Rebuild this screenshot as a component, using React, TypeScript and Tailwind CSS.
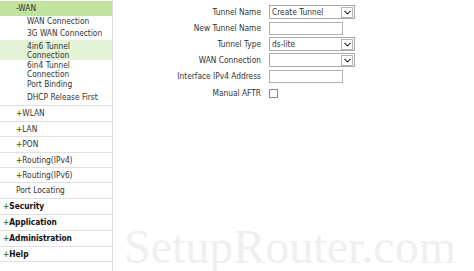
import React from 'react';

const font = { fontFamily: '"DejaVu Sans Condensed", "DejaVu Sans", sans-serif' };

const Plus = () => <span className="text-[#3f7f2a] font-bold">+</span>;

const Chevron = () => (
  <span className="flex h-[11px] w-[12px] items-center justify-center border border-[#b5b5b5] bg-white">
    <svg width="7" height="5" viewBox="0 0 7 5">
      <path d="M0.5 0.8 L3.5 3.8 L6.5 0.8" fill="none" stroke="#333" strokeWidth="1.2" />
    </svg>
  </span>
);

const Select = ({ value }: { value: string }) => (
  <div className="flex h-[14px] w-[86px] items-center justify-between border border-[#a9a9a9] bg-white pl-[2px] pr-[1px]">
    <span className="leading-none">{value}</span>
    <Chevron />
  </div>
);

const Input = () => <div className="h-[13px] w-[74px] border border-[#b0b0b0] bg-white" />;

const subItems: { label: string[]; cls: string; active?: boolean }[] = [
  { label: ['WAN Connection'], cls: 'h-[12px] pt-[1px]' },
  { label: ['3G WAN Connection'], cls: 'h-[12px] pt-[1px]' },
  { label: ['4in6 Tunnel', 'Connection'], cls: 'h-[20px] pt-[2px]', active: true },
  { label: ['6in4 Tunnel', 'Connection'], cls: 'h-[18px] pt-[1px]' },
  { label: ['Port Binding'], cls: 'h-[14px] pt-[2px]' },
  { label: ['DHCP Release First'], cls: 'h-[13px] pt-[1px]' },
];

const lanItems: { label: string; h: string; plus?: boolean }[] = [
  { label: 'WLAN', h: 'h-[16px]', plus: true },
  { label: 'LAN', h: 'h-[15px]', plus: true },
  { label: 'PON', h: 'h-[16px]', plus: true },
  { label: 'Routing(IPv4)', h: 'h-[15px]', plus: true },
  { label: 'Routing(IPv6)', h: 'h-[15px]', plus: true },
  { label: 'Port Locating', h: 'h-[16px]' },
];

const topItems: { label: string; h: string }[] = [
  { label: 'Security', h: 'h-[16px]' },
  { label: 'Application', h: 'h-[16px]' },
  { label: 'Administration', h: 'h-[16px]' },
  { label: 'Help', h: 'h-[15px]' },
];

const Sidebar = () => (
  <div className="w-[113px] shrink-0 border-r border-[#dcdcdc] pt-[1px]">
    <div className="flex h-[15px] items-center bg-[#c2e3a0] pl-[16px] text-[#333]">-WAN</div>
    {subItems.map((it, i) => (
      <div key={i} className={`${it.cls} pl-[27px] ${it.active ? 'bg-[#e4f2d6]' : ''}`}>
        {it.label.map((l, j) => (
          <div key={j} className="leading-[9px]">{l}</div>
        ))}
      </div>
    ))}
    <div className="border-t border-[#e0e0e0]">
      {lanItems.map((it, i) => (
        <div key={i} className={`${it.h} flex items-center border-b border-[#e0e0e0] pl-[16px]`}>
          {it.plus && <Plus />}
          {it.label}
        </div>
      ))}
      {topItems.map((it, i) => (
        <div key={i} className={`${it.h} flex items-center border-b border-[#e0e0e0] pl-[3px] font-bold text-[#111]`}>
          <Plus />
          {it.label}
        </div>
      ))}
    </div>
  </div>
);

const rows: { label: string; control: React.ReactNode }[] = [
  { label: 'Tunnel Name', control: <Select value="Create Tunnel" /> },
  { label: 'New Tunnel Name', control: <Input /> },
  { label: 'Tunnel Type', control: <Select value="ds-lite" /> },
  { label: 'WAN Connection', control: <Select value="" /> },
  { label: 'Interface IPv4 Address', control: <Input /> },
  { label: 'Manual AFTR', control: <div className="h-[9px] w-[9px] border border-[#8a8a8a] bg-white" /> },
];

export default function App() {
  return (
    <div className="relative h-[271px] w-[474px] overflow-hidden bg-white text-[8.3px] text-[#333]" style={font}>
      <div className="flex h-full">
        <Sidebar />
        <div className="flex-1 pt-[4px]">
          {rows.map((r, i) => (
            <div key={i} className={`flex items-center ${i === 5 ? 'h-[18px]' : 'h-[16px]'}`}>
              <div className="w-[152px] pr-[4px] text-right">{r.label}</div>
              <div className="pl-[4px]">{r.control}</div>
            </div>
          ))}
        </div>
      </div>
      <div
        className="pointer-events-none absolute left-[124px] top-[223px] text-[48px] leading-[48px] text-[#efefef]"
        style={{ fontFamily: '"Liberation Serif", serif' }}
      >
        SetupRouter.com
      </div>
    </div>
  );
}
